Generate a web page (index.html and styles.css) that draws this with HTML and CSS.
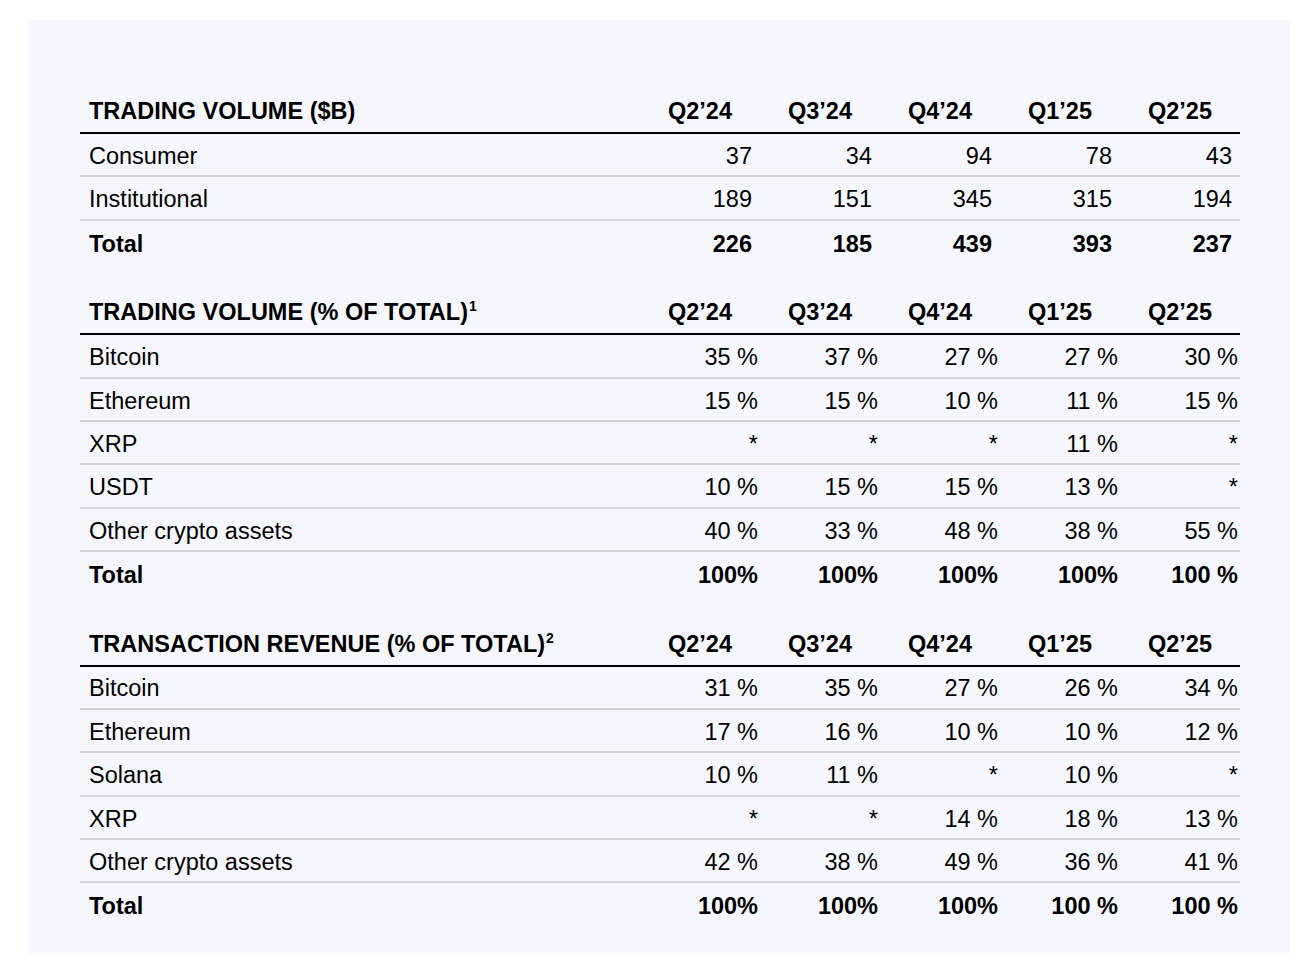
FILE: index.html
```html
<!DOCTYPE html>
<html lang="en">
<head>
<meta charset="utf-8">
<title>Trading volume and transaction revenue</title>
<link rel="stylesheet" href="styles.css">
</head>
<body>
<div class="page">
  <section class="panel">
    <div class="tbl t-num">
      <div class="row head"><div class="lbl">TRADING VOLUME ($B)</div><div class="q">Q2’24</div><div class="q">Q3’24</div><div class="q">Q4’24</div><div class="q">Q1’25</div><div class="q">Q2’25</div></div>
      <div class="row"><div class="lbl">Consumer</div><div class="v">37</div><div class="v">34</div><div class="v">94</div><div class="v">78</div><div class="v">43</div></div>
      <div class="row"><div class="lbl">Institutional</div><div class="v">189</div><div class="v">151</div><div class="v">345</div><div class="v">315</div><div class="v">194</div></div>
      <div class="row total"><div class="lbl">Total</div><div class="v">226</div><div class="v">185</div><div class="v">439</div><div class="v">393</div><div class="v">237</div></div>
    </div>

    <div class="tbl t-pct">
      <div class="row head"><div class="lbl">TRADING VOLUME (% OF TOTAL)<sup>1</sup></div><div class="q">Q2’24</div><div class="q">Q3’24</div><div class="q">Q4’24</div><div class="q">Q1’25</div><div class="q">Q2’25</div></div>
      <div class="row"><div class="lbl">Bitcoin</div><div class="v">35 %</div><div class="v">37 %</div><div class="v">27 %</div><div class="v">27 %</div><div class="v">30 %</div></div>
      <div class="row"><div class="lbl">Ethereum</div><div class="v">15 %</div><div class="v">15 %</div><div class="v">10 %</div><div class="v">11 %</div><div class="v">15 %</div></div>
      <div class="row"><div class="lbl">XRP</div><div class="v">*</div><div class="v">*</div><div class="v">*</div><div class="v">11 %</div><div class="v">*</div></div>
      <div class="row"><div class="lbl">USDT</div><div class="v">10 %</div><div class="v">15 %</div><div class="v">15 %</div><div class="v">13 %</div><div class="v">*</div></div>
      <div class="row"><div class="lbl">Other crypto assets</div><div class="v">40 %</div><div class="v">33 %</div><div class="v">48 %</div><div class="v">38 %</div><div class="v">55 %</div></div>
      <div class="row total"><div class="lbl">Total</div><div class="v">100%</div><div class="v">100%</div><div class="v">100%</div><div class="v">100%</div><div class="v">100 %</div></div>
    </div>

    <div class="tbl t-pct">
      <div class="row head"><div class="lbl">TRANSACTION REVENUE (% OF TOTAL)<sup>2</sup></div><div class="q">Q2’24</div><div class="q">Q3’24</div><div class="q">Q4’24</div><div class="q">Q1’25</div><div class="q">Q2’25</div></div>
      <div class="row"><div class="lbl">Bitcoin</div><div class="v">31 %</div><div class="v">35 %</div><div class="v">27 %</div><div class="v">26 %</div><div class="v">34 %</div></div>
      <div class="row"><div class="lbl">Ethereum</div><div class="v">17 %</div><div class="v">16 %</div><div class="v">10 %</div><div class="v">10 %</div><div class="v">12 %</div></div>
      <div class="row"><div class="lbl">Solana</div><div class="v">10 %</div><div class="v">11 %</div><div class="v">*</div><div class="v">10 %</div><div class="v">*</div></div>
      <div class="row"><div class="lbl">XRP</div><div class="v">*</div><div class="v">*</div><div class="v">14 %</div><div class="v">18 %</div><div class="v">13 %</div></div>
      <div class="row"><div class="lbl">Other crypto assets</div><div class="v">42 %</div><div class="v">38 %</div><div class="v">49 %</div><div class="v">36 %</div><div class="v">41 %</div></div>
      <div class="row total"><div class="lbl">Total</div><div class="v">100%</div><div class="v">100%</div><div class="v">100%</div><div class="v">100 %</div><div class="v">100 %</div></div>
    </div>
  </section>
</div>
</body>
</html>
```
FILE: styles.css
```css
html, body {
  margin: 0;
  padding: 0;
  background: #ffffff;
}

body {
  font-family: "Liberation Sans", Arial, Helvetica, sans-serif;
  color: #000;
}

.page {
  padding: 20px 14px 17px 28px;
}

.panel {
  width: 1262px;
  box-sizing: border-box;
  background: #f6f7fc;
  padding: 68px 50px 26px 52px;
  display: flex;
  flex-direction: column;
  gap: 25px;
}

.tbl {
  width: 1160px;
  display: flex;
  flex-direction: column;
}

.row {
  display: grid;
  grid-template-columns: 560px repeat(5, 120px);
  align-items: center;
  height: 43.4px;
  box-sizing: border-box;
  padding-top: 4px;
  border-bottom: 2px solid #d3d4d8;
  font-size: 23.5px;
  line-height: 1;
}

.row.total {
  border-bottom: none;
  font-weight: 700;
}

.row.head {
  height: 46px;
  border-bottom: 2px solid #000;
  font-weight: 700;
}

.lbl {
  padding-left: 9px;
  white-space: nowrap;
}

.lbl sup {
  font-size: 14px;
  vertical-align: baseline;
  position: relative;
  top: -9px;
  margin-left: 1px;
}

.q {
  text-align: center;
  white-space: nowrap;
}

.v {
  text-align: right;
  white-space: nowrap;
}

.t-num .v {
  padding-right: 8px;
}

.t-pct .v {
  padding-right: 2px;
}
```
